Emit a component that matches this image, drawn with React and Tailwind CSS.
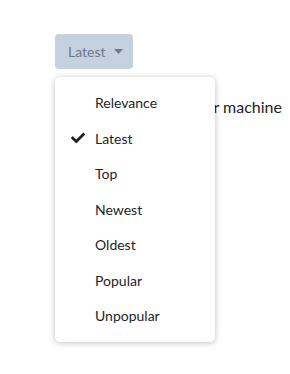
import { useState } from 'react';

const OPTIONS = ['Relevance', 'Latest', 'Top', 'Newest', 'Oldest', 'Popular', 'Unpopular'];

function Check() {
    return (
        <svg width="14" height="14" viewBox="0 0 512 512" className="text-[#1f2329]">
            <path
                fill="currentColor"
                d="M173.9 439.4l-166.4-166.4c-10-10-10-26.2 0-36.2l36.2-36.2c10-10 26.2-10 36.2 0L192 312.7 432.1 72.6c10-10 26.2-10 36.2 0l36.2 36.2c10 10 10 26.2 0 36.2l-294.4 294.4c-10 10-26.2 10-36.2 0z"
            />
        </svg>
    );
}

export default function App() {
    const [selected, setSelected] = useState('Latest');

    return (
        <div className="relative w-[290px] h-[374px] bg-white font-['Lato',sans-serif] overflow-hidden">
            <div className="pt-[34px] pl-[55px]">
                <button className="h-[35px] w-[78px] flex items-center gap-[8px] pl-[13px] bg-[#c6d1df] rounded-[4px] text-[14px] text-[#6a7990]">
                    {selected}
                    <svg width="9" height="5" viewBox="0 0 9 5">
                        <path d="M0 0 H9 L4.5 5 Z" fill="#6a7990" />
                    </svg>
                </button>
            </div>

            {/* page text behind the menu */}
            <div className="flex justify-end pr-[8px] mt-[27px] text-[16px] leading-[22px] text-[#222]">
                <span>Posts for machine</span>
            </div>

            {/* Dropdown */}
            <ul className="absolute left-[55px] top-[77px] w-[160px] py-[8px] bg-white rounded-[5px] shadow-[0_1px_6px_rgba(0,0,0,0.25)]">
                {OPTIONS.map(opt => (
                    <li
                        key={opt}
                        onClick={() => setSelected(opt)}
                        className="relative h-[35.5px] flex items-center pl-[40px] text-[14px] text-[#212529] cursor-pointer"
                    >
                        {opt === selected && (
                            <span className="absolute left-[16px] top-[10.5px] flex"><Check /></span>
                        )}
                        {opt}
                    </li>
                ))}
            </ul>
        </div>
    );
}
